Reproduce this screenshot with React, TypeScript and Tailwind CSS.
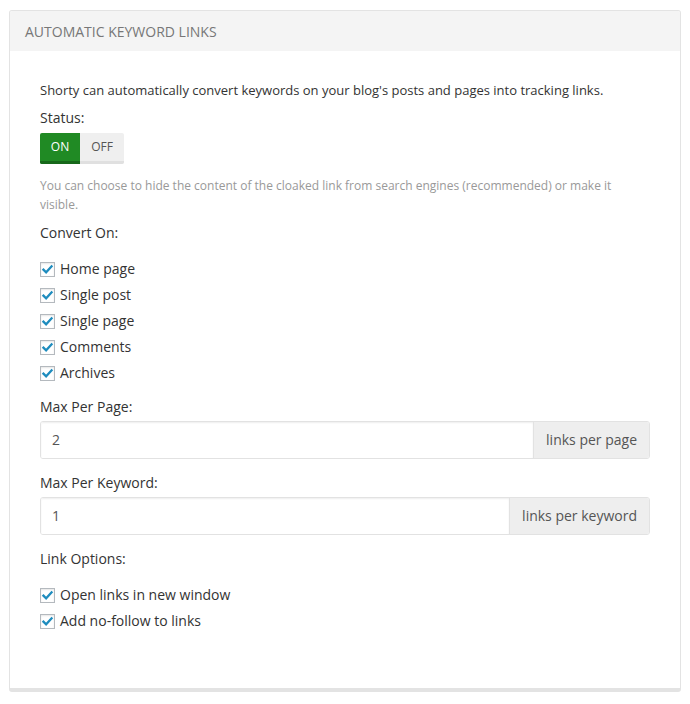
import React from 'react';

const Check = ({ label }: { label: string }) => (
  <label className="flex items-center h-[20px] gap-[5px] text-[14px]">
    <span className="w-[15px] h-[15px] border border-[#b4b9be] bg-white shadow-[inset_0_1px_2px_rgba(0,0,0,0.1)] flex items-center justify-center">
      <svg viewBox="0 0 16 16" className="w-[13px] h-[13px]">
        <path d="M3 8.2 L6.3 11.4 L13 4.2" fill="none" stroke="#1e8cbe" strokeWidth="2.8" strokeLinecap="square" />
      </svg>
    </span>
    <span>{label}</span>
  </label>
);

const AddonInput = ({ value, addon }: { value: string; addon: string }) => (
  <div className="flex h-[38px] mt-[4px] border border-[#e2e2e2] rounded-[3px] overflow-hidden">
    <div className="flex-1 bg-white flex items-center px-[11px] shadow-[inset_0_1px_2px_rgba(0,0,0,0.07)] text-[14px] text-[#555]">
      {value}
    </div>
    <div className="bg-[#eeeeee] border-l border-[#e2e2e2] flex items-center px-[12px] text-[14px] text-[#555]">
      {addon}
    </div>
  </div>
);

const App = () => {
  return (
    <div className="bg-white w-[690px] h-[704px] pt-[10px] px-[9px]" style={{ fontFamily: '"Open Sans", sans-serif' }}>
      <div className="w-[672px] border border-[#e3e3e3] border-b-[4px] border-b-[#e3e3e3] rounded-[3px] overflow-hidden">
        <div className="h-[40px] bg-[#f4f4f4] flex items-center px-[15px] text-[14px] text-[#777]">
          AUTOMATIC KEYWORD LINKS
        </div>
        <div className="bg-white px-[30px] pt-[29px] pb-[57px] text-[14px] text-[#333] leading-[20px]">
          <p className="text-[13px]">Shorty can automatically convert keywords on your blog's posts and pages into tracking links.</p>
          <div className="mt-[8px]">Status:</div>
          <div className="mt-[5px] flex h-[31px] w-[84px] rounded-[2px] overflow-hidden">
            <div className="w-[40px] bg-[#208a24] border-b-[3px] border-[#17681a] text-white flex items-center justify-center text-[12px] font-medium">
              ON
            </div>
            <div className="w-[44px] bg-[#efefef] border-b-[3px] border-[#e0e0e0] text-[#555] flex items-center justify-center text-[12px] font-medium">
              OFF
            </div>
          </div>
          <p className="mt-[12px] text-[12px] leading-[19px] text-[#999]">
            You can choose to hide the content of the cloaked link from search engines (recommended) or make it visible.
          </p>
          <div className="mt-[9px]">Convert On:</div>
          <div className="mt-[16px] flex flex-col gap-[6px]">
            <Check label="Home page" />
            <Check label="Single post" />
            <Check label="Single page" />
            <Check label="Comments" />
            <Check label="Archives" />
          </div>
          <div className="mt-[14px]">Max Per Page:</div>
          <AddonInput value="2" addon="links per page" />
          <div className="mt-[14px]">Max Per Keyword:</div>
          <AddonInput value="1" addon="links per keyword" />
          <div className="mt-[14px]">Link Options:</div>
          <div className="mt-[16px] flex flex-col gap-[6px]">
            <Check label="Open links in new window" />
            <Check label="Add no-follow to links" />
          </div>
        </div>
      </div>
    </div>
  );
};

export default App;
